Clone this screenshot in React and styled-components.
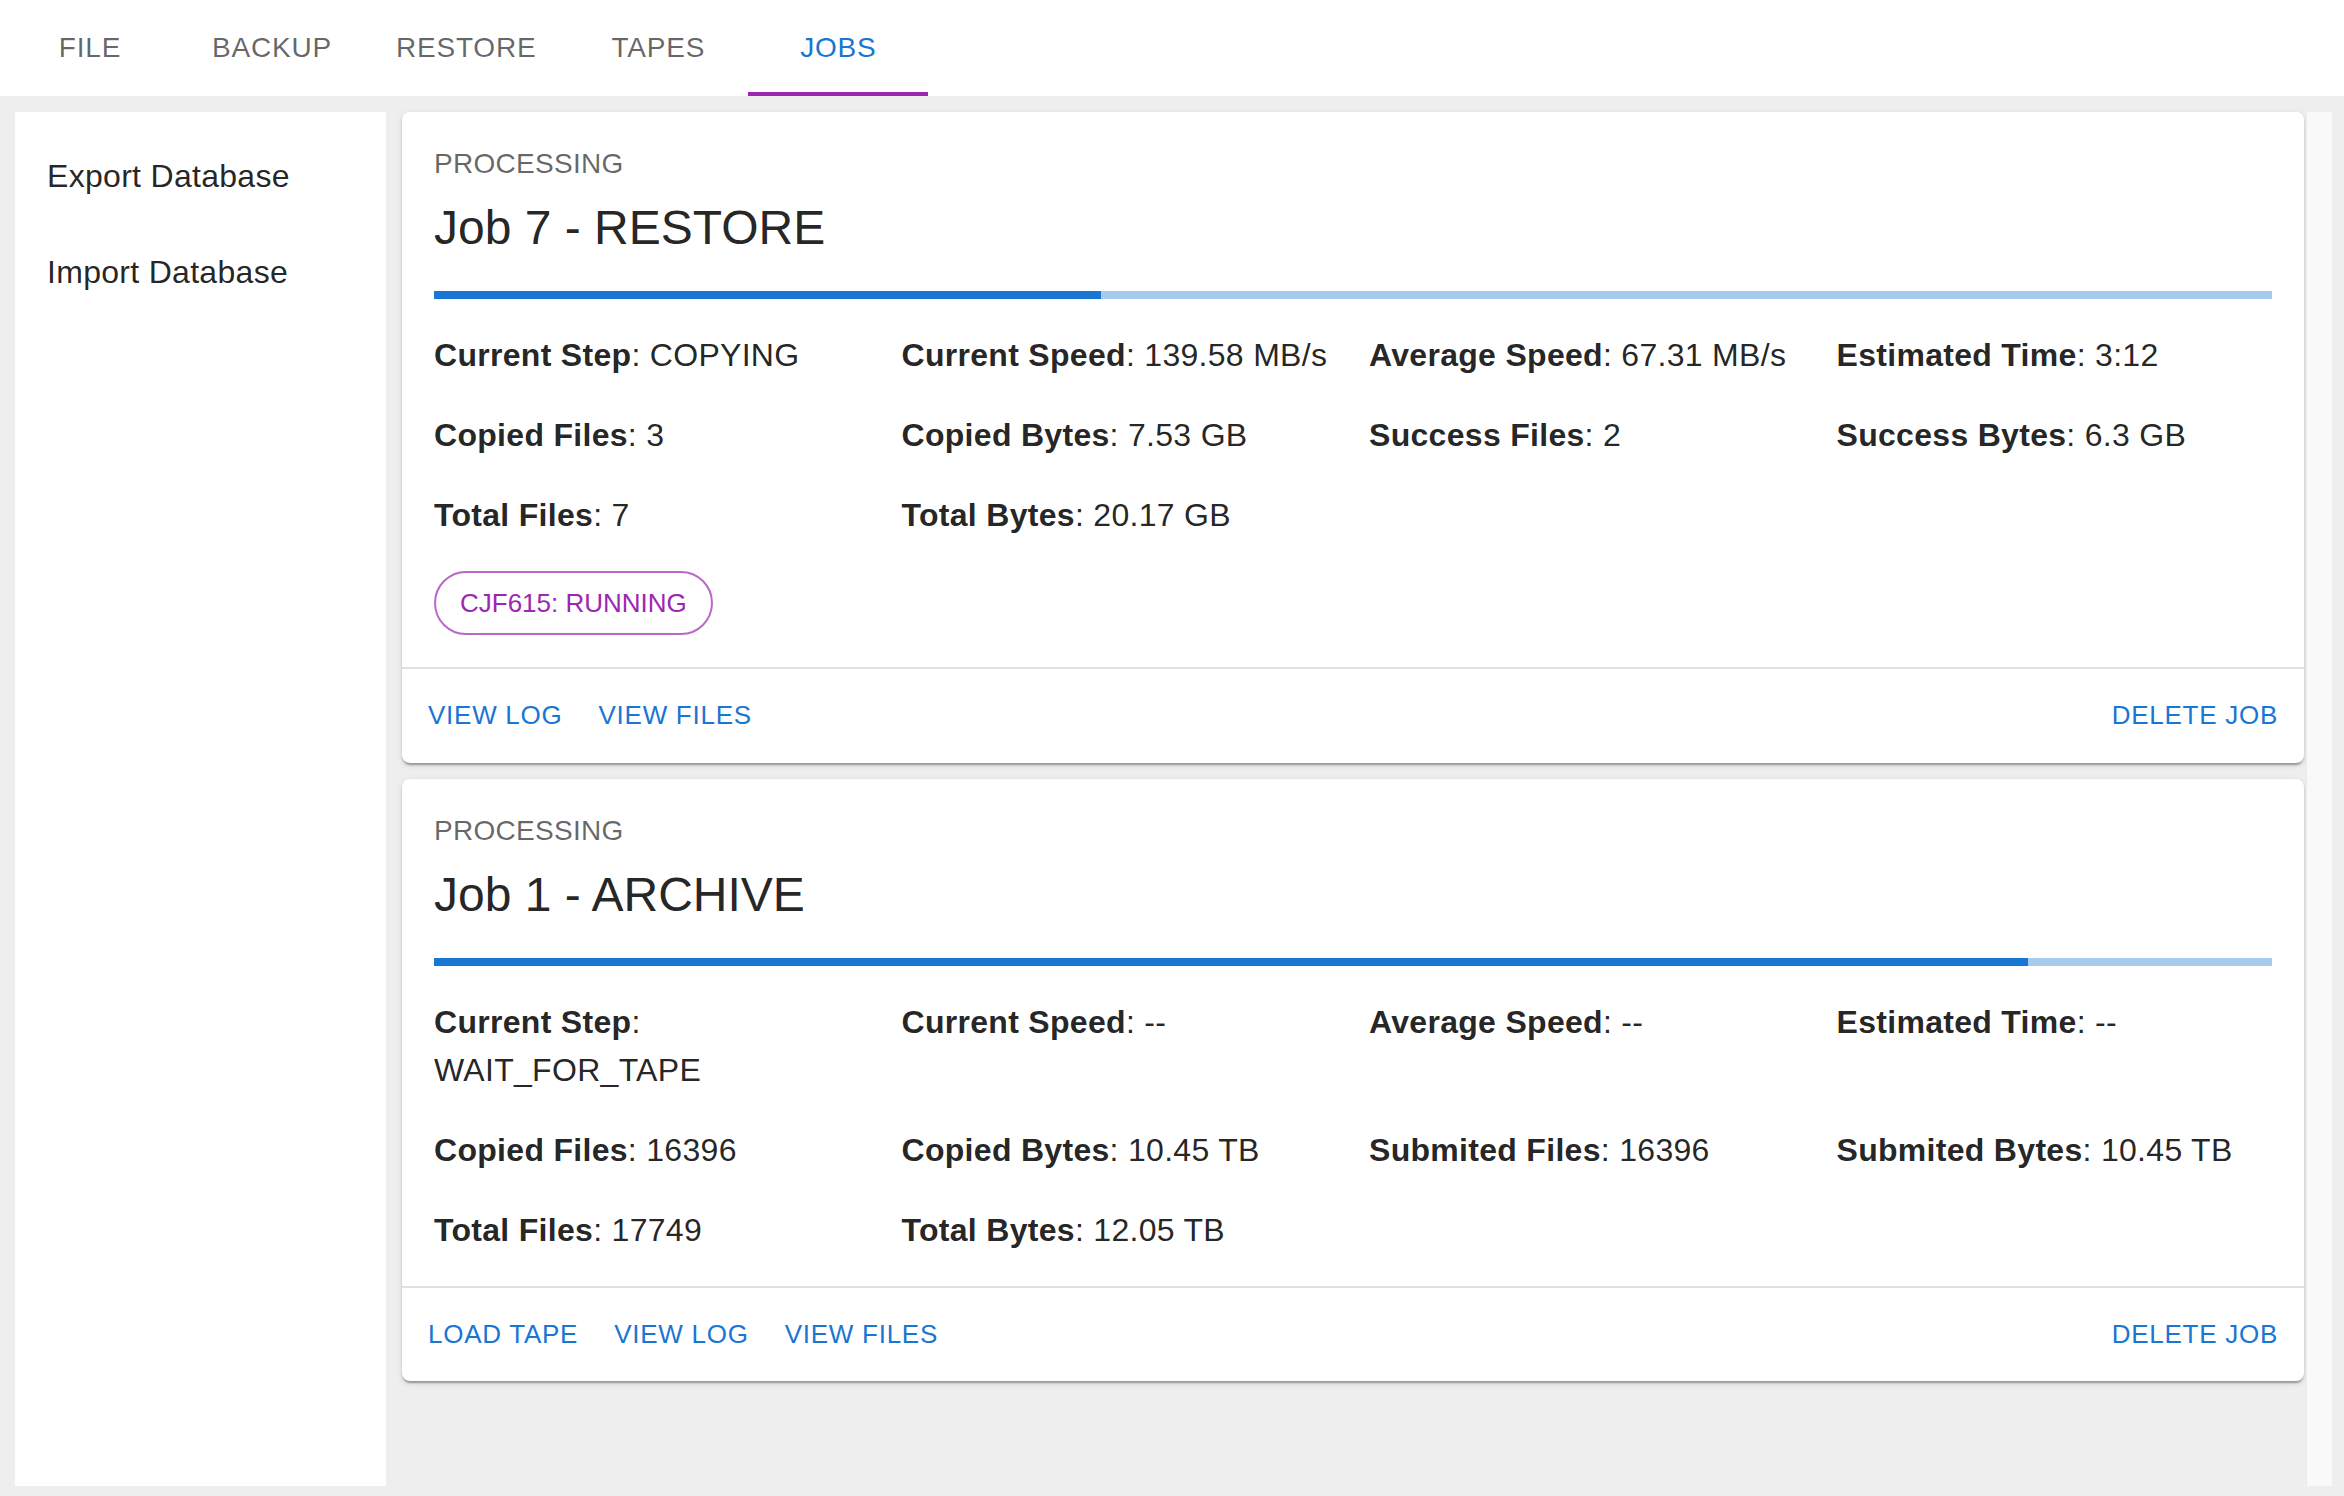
import React from "react";
import styled, { createGlobalStyle } from "styled-components";

const GlobalStyle = createGlobalStyle`
    html, body {
        margin: 0;
        padding: 0;
        background: #eeeeee;
        font-family: "Liberation Sans", Arial, Helvetica, sans-serif;
        color: rgba(0, 0, 0, 0.87);
    }
    * {
        box-sizing: border-box;
    }
`;

const Page = styled.div`
    width: 2344px;
    height: 1496px;
    display: flex;
    flex-direction: column;
    overflow: hidden;
`;

const TabBar = styled.nav`
    height: 96px;
    flex: none;
    background: #ffffff;
    display: flex;
    align-items: stretch;
`;

const Tab = styled.div`
    position: relative;
    min-width: 180px;
    padding: 0 32px;
    display: flex;
    align-items: center;
    justify-content: center;
    font-size: 28px;
    font-weight: 500;
    letter-spacing: 0.8px;
    text-transform: uppercase;
    color: ${({ active }) => (active ? "#1976d2" : "rgba(0, 0, 0, 0.6)")};
    cursor: pointer;
    &::after {
        content: "";
        display: ${({ active }) => (active ? "block" : "none")};
        position: absolute;
        left: 0;
        right: 0;
        bottom: 0;
        height: 4px;
        background: #9c27b0;
    }
`;

const Main = styled.div`
    flex: 1;
    display: flex;
    gap: 16px;
    padding: 16px 12px 10px 15px;
    min-height: 0;
`;

const Sidebar = styled.aside`
    width: 371px;
    flex: none;
    background: #ffffff;
    padding: 16px 0;
`;

const MenuItem = styled.div`
    padding: 24px 32px;
    font-size: 32px;
    line-height: 48px;
    letter-spacing: 0.3px;
    color: rgba(0, 0, 0, 0.87);
    cursor: pointer;
`;

const JobsPane = styled.div`
    flex: 1;
    display: flex;
    gap: 2px;
    min-width: 0;
`;

const JobList = styled.div`
    flex: 1;
    display: flex;
    flex-direction: column;
    gap: 16px;
    min-width: 0;
`;

const ScrollTrack = styled.div`
    width: 26px;
    flex: none;
    background: #f9f9f9;
    border-left: 1px solid #ececec;
`;

const Card = styled.section`
    background: #ffffff;
    border-radius: 8px;
    box-shadow: 0 4px 2px -2px rgba(0, 0, 0, 0.2), 0 2px 2px 0 rgba(0, 0, 0, 0.14),
        0 2px 6px 0 rgba(0, 0, 0, 0.12);
`;

const CardContent = styled.div`
    padding: 32px;
    display: flex;
    flex-direction: column;
`;

const Overline = styled.div`
    font-size: 28px;
    line-height: 40px;
    letter-spacing: 0.3px;
    color: rgba(0, 0, 0, 0.6);
    margin-bottom: 12px;
`;

const Title = styled.h2`
    margin: 0;
    font-size: 48px;
    line-height: 64px;
    font-weight: 400;
    color: rgba(0, 0, 0, 0.87);
`;

const Progress = styled.div`
    height: 8px;
    margin: 31px 0 32px;
    background: #a7caed;
    overflow: hidden;
`;

const ProgressFill = styled.div`
    height: 100%;
    background: #1976d2;
`;

const Fields = styled.div`
    display: grid;
    grid-template-columns: repeat(4, 1fr);
    column-gap: 32px;
    row-gap: 32px;
`;

const Field = styled.div`
    font-size: 32px;
    line-height: 48px;
    letter-spacing: 0.3px;
    color: rgba(0, 0, 0, 0.87);
    b {
        font-weight: 700;
    }
`;

const ChipRow = styled.div`
    grid-column: 1 / -1;
    display: flex;
`;

const Chip = styled.span`
    height: 64px;
    padding: 0 24px;
    display: inline-flex;
    align-items: center;
    border: 2px solid rgba(156, 39, 176, 0.7);
    border-radius: 32px;
    font-size: 26px;
    color: #9c27b0;
`;

const Actions = styled.div`
    border-top: 2px solid #e0e0e0;
    padding: 16px;
    display: flex;
    align-items: center;
    gap: 16px;
`;

const TextButton = styled.button`
    border: 0;
    background: transparent;
    padding: 8px 10px;
    font-family: inherit;
    font-size: 26px;
    line-height: 45.5px;
    font-weight: 500;
    letter-spacing: 0.74px;
    text-transform: uppercase;
    color: #1976d2;
    cursor: pointer;
    margin-left: ${({ push }) => (push ? "auto" : "0")};
`;

const tabs = ["File", "Backup", "Restore", "Tapes", "Jobs"];

const jobs = [
    {
        id: 7,
        type: "RESTORE",
        progress: 36.3,
        fields: [
            ["Current Step", "COPYING"],
            ["Current Speed", "139.58 MB/s"],
            ["Average Speed", "67.31 MB/s"],
            ["Estimated Time", "3:12"],
            ["Copied Files", "3"],
            ["Copied Bytes", "7.53 GB"],
            ["Success Files", "2"],
            ["Success Bytes", "6.3 GB"],
            ["Total Files", "7"],
            ["Total Bytes", "20.17 GB"],
        ],
        chip: "CJF615: RUNNING",
        actions: ["View Log", "View Files"],
    },
    {
        id: 1,
        type: "ARCHIVE",
        progress: 86.7,
        fields: [
            ["Current Step", "WAIT_FOR_TAPE"],
            ["Current Speed", "--"],
            ["Average Speed", "--"],
            ["Estimated Time", "--"],
            ["Copied Files", "16396"],
            ["Copied Bytes", "10.45 TB"],
            ["Submited Files", "16396"],
            ["Submited Bytes", "10.45 TB"],
            ["Total Files", "17749"],
            ["Total Bytes", "12.05 TB"],
        ],
        actions: ["Load Tape", "View Log", "View Files"],
    },
];

const JobCard = ({ job }) => (
    <Card>
        <CardContent>
            <Overline>PROCESSING</Overline>
            <Title>
                Job {job.id} - {job.type}
            </Title>
            <Progress>
                <ProgressFill style={{ width: `${job.progress}%` }} />
            </Progress>
            <Fields>
                {job.fields.map(([label, value]) => (
                    <Field key={label}>
                        <b>{label}</b>: {value}
                    </Field>
                ))}
                {job.chip && (
                    <ChipRow>
                        <Chip>{job.chip}</Chip>
                    </ChipRow>
                )}
            </Fields>
        </CardContent>
        <Actions>
            {job.actions.map((a) => (
                <TextButton key={a}>{a}</TextButton>
            ))}
            <TextButton push>Delete Job</TextButton>
        </Actions>
    </Card>
);

const App = () => {
    return (
        <Page>
            <GlobalStyle />
            <TabBar>
                {tabs.map((t) => (
                    <Tab key={t} active={t === "Jobs"}>
                        {t}
                    </Tab>
                ))}
            </TabBar>
            <Main>
                <Sidebar>
                    <MenuItem>Export Database</MenuItem>
                    <MenuItem>Import Database</MenuItem>
                </Sidebar>
                <JobsPane>
                    <JobList>
                        {jobs.map((job) => (
                            <JobCard key={job.id} job={job} />
                        ))}
                    </JobList>
                    <ScrollTrack />
                </JobsPane>
            </Main>
        </Page>
    );
};

export default App;
